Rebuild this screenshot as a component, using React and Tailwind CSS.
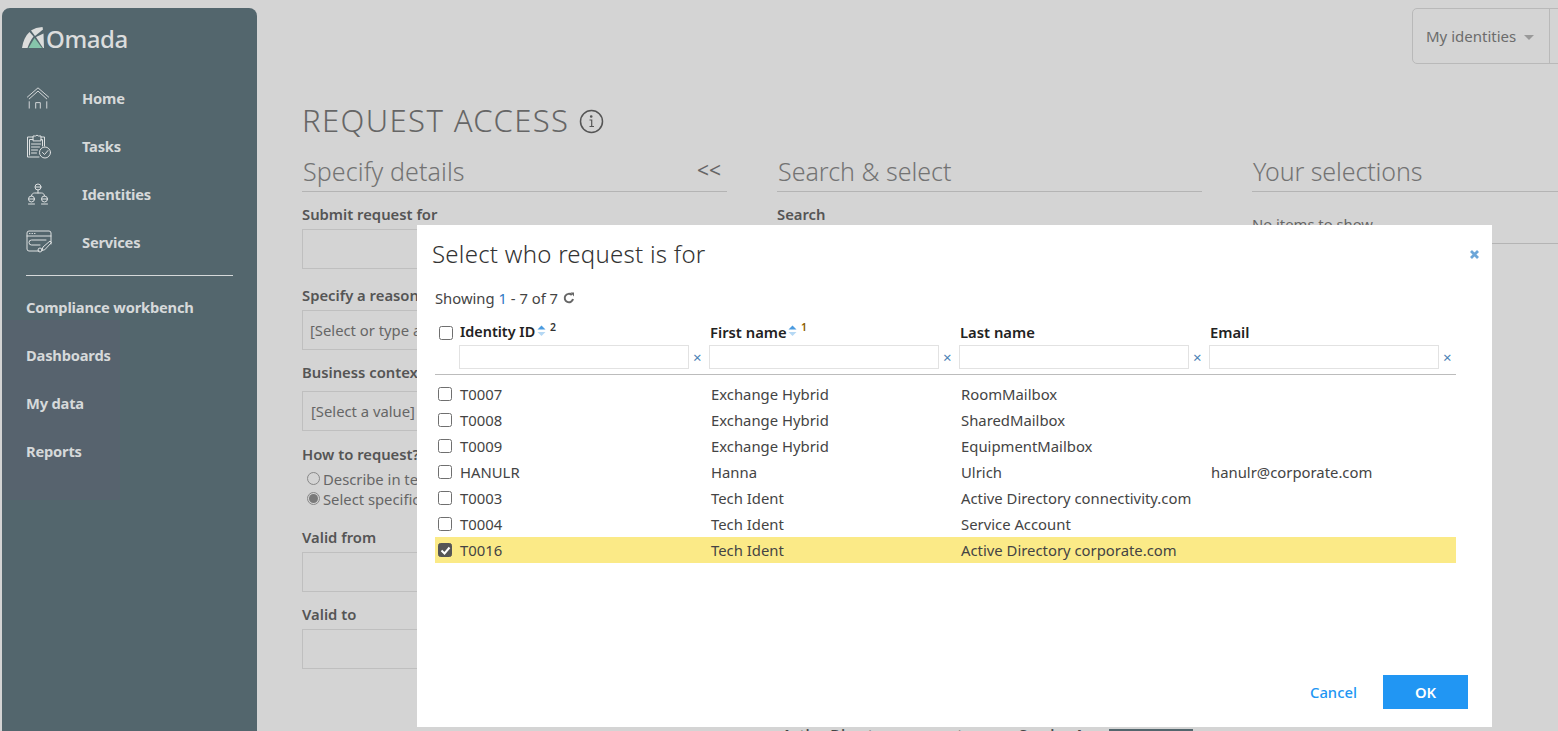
const sans = "font-['Open_Sans',sans-serif]";
const head = "font-['Lato',sans-serif]";

function NavIcon({ name }) {
  const c = { fill: "none", stroke: "#dde0e1", strokeWidth: 1, strokeLinecap: "round", strokeLinejoin: "round" };
  if (name === "home") return (
    <svg width="24" height="24" viewBox="0 0 26 26" {...c}>
      <path d="M1.500 12 13 2l11.500 10" /><path d="M3.500 14 13 5.500 22.500 14" />
      <path d="M3.500 17v7M22.500 17v7" /><path d="M10.500 24v-6h5v6" />
    </svg>
  );
  if (name === "tasks") return (
    <svg width="26" height="26" viewBox="0 0 26 26" {...c}>
      <path d="M7 4H1.500v20H13" /><path d="M3.500 22V6.500H7M15 6.500h1.500V13M15 4h3.500v9" /><path d="M7 7.500V3h2.500a2 2 0 0 1 3 0H15v4.500Z" />
      <path d="M5.500 11h9M5.500 14h8M5.500 17h6M5.500 20h5" /><circle cx="19" cy="19.500" r="5.500" /><path d="m16.500 19.500 2 2 3.500-4" />
    </svg>
  );
  if (name === "identities") return (
    <svg width="24" height="24" viewBox="0 0 24 24" {...c}>
      <circle cx="12" cy="5" r="3" /><path d="M9.500 5h5M12 8v3M5.500 14c0-2 1.500-3 3-3h7c1.500 0 3 1 3 3" />
      <circle cx="5.500" cy="17" r="3" /><path d="M3 17h5M2.500 22h6" /><circle cx="18.500" cy="17" r="3" /><path d="M16 17h5M15.500 22h6" />
    </svg>
  );
  return (
    <svg width="26" height="24" viewBox="0 0 26 24" {...c}>
      <path d="M13 21H3a2 2 0 0 1-2-2V3a2 2 0 0 1 2-2h20a2 2 0 0 1 2 2v11M1 6h24" />
      <path d="M3.500 3.500h.5M6 3.500h.5M8.500 3.500h.5" /><path d="M20 10H5.500a2 2 0 0 0 0 5H14" />
      <path d="m16 20 1-3 7-6 1.500 1.500-6.500 7Z" /><circle cx="14" cy="20" r="2" />
    </svg>
  );
}

function Logo() {
  return (
    <svg width="22" height="22" viewBox="0 0 22 22">
      <path d="M0 21C1 14 3.500 8.500 7.500 5L11.500 9.500C9 12.500 7 16.500 5.500 21Z" fill="#dcdddc" />
      <path d="M9 3.500C12 1.500 16 0.300 20.500 0L21 2.500 13 9Z" fill="#dcdddc" />
      <path d="M14 10 21.500 6.500 22 21H21Z" fill="#dcdddc" />
      <path d="M6.500 21 12.500 11 20 21Z" fill="#86c5ab" />
    </svg>
  );
}

function Nav({ children, y, icon }) {
  return (
    <div className="absolute left-[26px] flex h-[26px] items-center" style={{ top: y }}>
      {icon && <span className="flex w-[56px] justify-start"><NavIcon name={icon} /></span>}
      <span className="text-[14.700px] font-bold tracking-[-0.2px] text-[#d6d9da] font-['Lato',sans-serif]">{children}</span>
    </div>
  );
}

function Field({ label, y, boxY, value, vx = 7 }) {
  return (
    <>
      <div className={`absolute left-[302px] text-[14.800px] font-semibold leading-[20px] text-[#555] ${sans}`} style={{ top: y }}>{label}</div>
      <div className={`absolute left-[302px] h-[40px] w-[125px] border border-[#bfbfbf] text-[14.800px] text-[#666] flex items-center ${sans}`} style={{ top: boxY, paddingLeft: vx }}>
        <span className="whitespace-nowrap">{value}</span>
      </div>
    </>
  );
}

function Clear({ left }) {
  return <span className="absolute top-[347px] text-[15px] leading-[20px] text-[#4a7fb5]" style={{ left }}>×</span>;
}

function FilterInput({ left }) {
  return <div className="absolute top-[345px] h-[24px] w-[230px] border border-[#e2e2e2] bg-white" style={{ left }} />;
}

function Sort({ left }) {
  return (
    <svg className="absolute top-[325px]" style={{ left }} width="9" height="12" viewBox="0 0 9 12">
      <path d="M4.500 0.500 8.500 4.500H0.500Z" fill="#4b9be0" />
      <path d="M4.500 11 8.500 7H0.500Z" fill="#b5d8f4" />
    </svg>
  );
}

const rows = [
  ["T0007", "Exchange Hybrid", "RoomMailbox", ""],
  ["T0008", "Exchange Hybrid", "SharedMailbox", ""],
  ["T0009", "Exchange Hybrid", "EquipmentMailbox", ""],
  ["HANULR", "Hanna", "Ulrich", "hanulr@corporate.com"],
  ["T0003", "Tech Ident", "Active Directory connectivity.com", ""],
  ["T0004", "Tech Ident", "Service Account", ""],
  ["T0016", "Tech Ident", "Active Directory corporate.com", ""],
];

function Box({ checked, left, top }) {
  return (
    <span
      className={`absolute flex h-[14px] w-[14px] items-center justify-center rounded-[2.500px] border ${checked ? "border-[#555] bg-[#555]" : "border-[#6f6f6f] bg-white"}`}
      style={{ left, top }}
    >
      {checked && (
        <svg width="11" height="11" viewBox="0 0 11 11" fill="none" stroke="#fff" strokeWidth="2"><path d="m1.500 5.500 3 3 5-6" /></svg>
      )}
    </span>
  );
}

export default function App() {
  return (
    <div className={`relative h-[731px] w-[1558px] overflow-hidden bg-[#d4d4d4] ${sans}`}>
      {/* Sidebar */}
      <aside className="absolute left-[2px] top-[8px] h-[723px] w-[255px] rounded-t-[8px] bg-[#53666d]" />
      <div className="absolute left-[2px] top-[320px] h-[180px] w-[118px] bg-[#57636e]" />
      <div className="absolute left-[22px] top-[27px]"><Logo /></div>
      <div className="absolute left-[46px] top-[22px] text-[24px] font-medium leading-[34px] tracking-[-0.4px] text-[#dcdddd] font-['Lato',sans-serif]">Omada</div>
      <Nav y={85} icon="home">Home</Nav>
      <Nav y={133} icon="tasks">Tasks</Nav>
      <Nav y={181} icon="identities">Identities</Nav>
      <Nav y={229} icon="services">Services</Nav>
      <div className="absolute left-[26px] top-[275px] h-px w-[207px] bg-[#d6d9da]" />
      <Nav y={294}>Compliance workbench</Nav>
      <Nav y={342}>Dashboards</Nav>
      <Nav y={390}>My data</Nav>
      <Nav y={438}>Reports</Nav>

      {/* Identity dropdown */}
      <div className="absolute left-[1412px] top-[8px] flex h-[56px] w-[200px] rounded-[5px] border border-[#b9b9b9]">
        <div className={`flex h-full w-[137px] items-center gap-[8px] border-r border-[#b9b9b9] pl-[13px] text-[15px] text-[#6c6c6c] ${head}`}>
          My identities
          <span className="mt-[2px] h-0 w-0 border-x-[5px] border-t-[5px] border-x-transparent border-t-[#999]" />
        </div>
      </div>

      {/* Page */}
      <h1 className={`absolute left-[302px] top-[100px] text-[31px] font-light leading-[40px] tracking-[1.400px] text-[#666] ${head}`}>REQUEST ACCESS</h1>
      <svg className="absolute left-[579px] top-[109px]" width="25" height="25" viewBox="0 0 25 25" fill="none" stroke="#555" strokeWidth="1.500">
        <circle cx="12.500" cy="12.500" r="11" />
        <path d="M10.500 11h2.200v6M10.500 17.500h4.500" strokeWidth="1.200" />
        <circle cx="12.200" cy="7.500" r="0.600" fill="#555" />
      </svg>

      {[
        [302, 425, "Specify details", "tracking-[0.1px]"],
        [777, 425, "Search & select", "tracking-normal"],
        [1252, 306, "Your selections", "tracking-[-0.1px]"],
      ].map(([x, w, t, tr]) => (
        <div key={t} className="absolute top-[152px] h-[40px] border-b border-[#b4b4b4] pl-px" style={{ left: x, width: w }}>
          <span className={`text-[25px] font-light leading-[38px] text-[#737373] ${head} ${tr}`}>{t}</span>
        </div>
      ))}
      <span className={`absolute left-[697px] top-[155px] text-[21px] leading-[30px] text-[#666] ${sans}`}>&lt;&lt;</span>

      <Field label="Submit request for" y={204} boxY={229} />
      <Field label="Specify a reason" y={285} boxY={310} value="[Select or type a reason]" />
      <Field label="Business context" y={362} boxY={391} value="[Select a value]" vx={8} />
      <div className="absolute left-[302px] top-[444px] text-[14.800px] font-semibold leading-[20px] text-[#555]">How to request?</div>
      <div className="absolute left-[307px] top-[472px] h-[13px] w-[13px] rounded-full border border-[#888] bg-[#d4d4d4]" />
      <div className="absolute left-[323px] top-[469px] text-[14.800px] leading-[20px] text-[#666]">Describe in text</div>
      <div className="absolute left-[307px] top-[492px] flex h-[13px] w-[13px] items-center justify-center rounded-full border border-[#888]">
        <span className="h-[9px] w-[9px] rounded-full bg-[#7a7a7a]" />
      </div>
      <div className="absolute left-[323px] top-[489px] text-[14.800px] leading-[20px] text-[#666]">Select specific</div>
      <Field label="Valid from" y={527} boxY={552} />
      <Field label="Valid to" y={604} boxY={629} />

      <div className="absolute left-[777px] top-[204px] text-[14.800px] font-semibold leading-[20px] text-[#555]">Search</div>
      <div className="absolute left-[1252px] top-[214px] text-[14.800px] leading-[20px] text-[#666]">No items to show</div>
      <div className="absolute left-[1252px] top-[243px] h-px w-[306px] bg-[#b4b4b4]" />
      <div className="absolute left-[782px] top-[724px] text-[14.800px] font-semibold leading-[20px] text-[#444]">Active Directory corporate.com</div>
      <div className="absolute left-[1019px] top-[724px] text-[14.800px] font-semibold leading-[20px] text-[#444]">Service A</div>
      <div className="absolute left-[1109px] top-[729px] h-[2px] w-[84px] bg-[#53666d]" />

      {/* Modal */}
      <div className="absolute left-[417px] top-[225px] h-[502px] w-[1075px] bg-white" />
      <h2 className={`absolute left-[432px] top-[238px] text-[24px] font-light leading-[32px] tracking-[0.25px] text-[#333] ${head}`}>Select who request is for</h2>
      <svg className="absolute left-[1470px] top-[250px]" width="9" height="9" viewBox="0 0 9 9" fill="none" stroke="#6ca6d8" strokeWidth="2.800"><path d="m1 1 7 7M8 1 1 8" /></svg>

      <div className="absolute left-[435px] top-[288px] flex items-center text-[14.800px] leading-[20px] text-[#444]">
        Showing&nbsp;<span className="text-[#2f78c4]">1</span>&nbsp;- 7 of 7
        <svg className="ml-[5px]" width="12" height="12" viewBox="0 0 12 12" fill="none" stroke="#666" strokeWidth="2">
          <path d="M10 7A4.200 4.200 0 1 1 8.800 3" /><path d="M7.500 0.500h3.500V4.500Z" fill="#666" stroke="none" />
        </svg>
      </div>

      <Box left={439} top={326} />
      {[
        [460, "Identity ID", "text-[14.400px]"],
        [710, "First name", "text-[14.800px]"],
        [960, "Last name", "text-[14.800px]"],
        [1210, "Email", "text-[14.800px]"],
      ].map(([x, t, s]) => (
        <span key={t} className={`absolute top-[322px] font-semibold leading-[20px] text-[#222] ${s}`} style={{ left: x }}>{t}</span>
      ))}
      <Sort left={537} />
      <span className="absolute left-[550px] top-[320px] text-[10.500px] font-semibold leading-[14px] text-[#333]">2</span>
      <Sort left={788} />
      <span className="absolute left-[801px] top-[320px] text-[10.500px] font-semibold leading-[14px] text-[#8a5d00]">1</span>

      {[459, 709, 959, 1209].map((x) => <FilterInput key={x} left={x} />)}
      {[693, 943, 1193, 1443].map((x) => <Clear key={x} left={x} />)}
      <div className="absolute left-[435px] top-[374px] h-px w-[1021px] bg-[#bcbcbc]" />

      <div className="absolute left-[435px] top-[381px] w-[1021px]">
        {rows.map((r, i) => (
          <div
            key={r[0]}
            className={`relative grid h-[26px] grid-cols-[276px_250px_250px_1fr] items-center text-[14.850px] text-[#444] ${i === 6 ? "bg-[#fbea87]" : ""}`}
          >
            <Box left={3} top={6} checked={i === 6} />
            <span className="pl-[25px]">{r[0]}</span>
            <span>{r[1]}</span>
            <span>{r[2]}</span>
            <span>{r[3]}</span>
          </div>
        ))}
      </div>

      <span className="absolute left-[1310px] top-[682px] text-[14.800px] font-medium leading-[20px] text-[#2196f3]">Cancel</span>
      <div className="absolute left-[1383px] top-[675px] flex h-[34px] w-[85px] items-center justify-center bg-[#2196f3] text-[14.800px] font-semibold text-white">OK</div>
    </div>
  );
}
